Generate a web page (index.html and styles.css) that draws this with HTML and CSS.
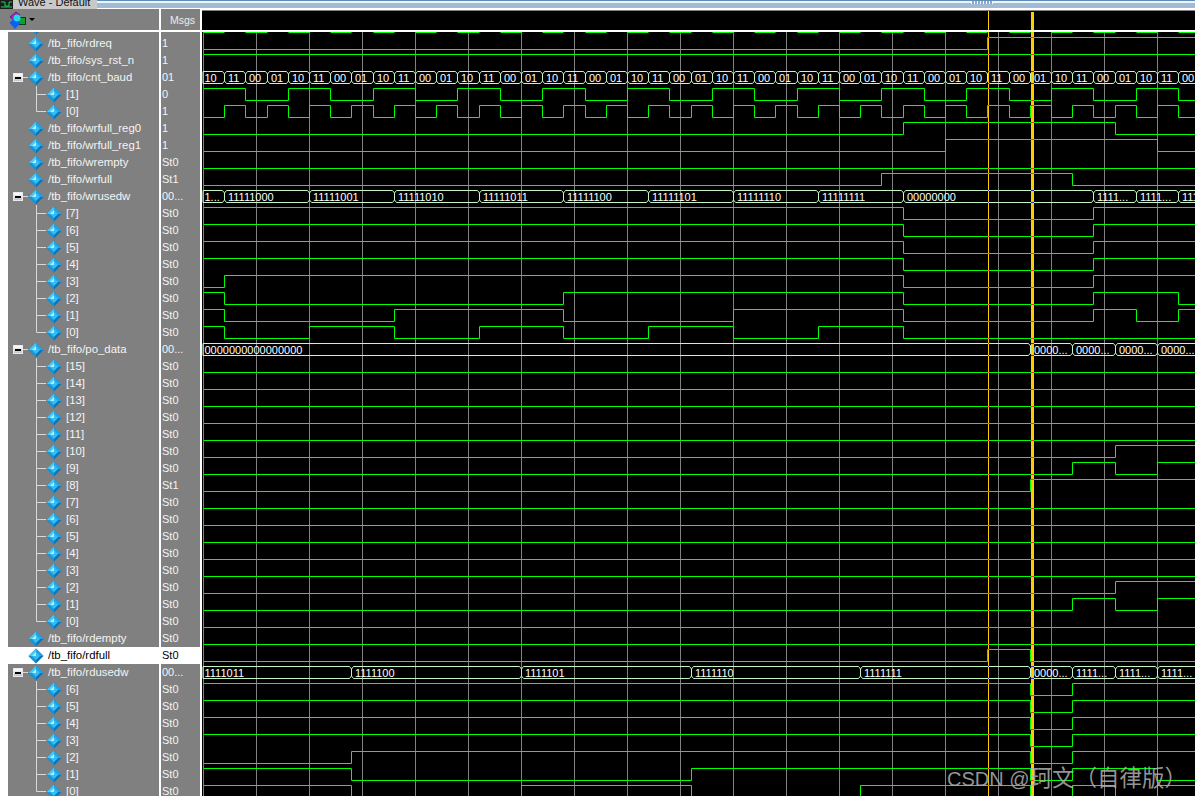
FILE: index.html
```html
<!DOCTYPE html>
<html lang="en">
<head>
<meta charset="utf-8">
<title>Wave - Default</title>
<link rel="stylesheet" href="styles.css">
</head>
<body>
<svg class="defs" width="0" height="0" aria-hidden="true">
  <symbol id="dia" viewBox="0 0 16 16">
    <polygon points="8,0.5 15.5,8 8,15.5 0.5,8" fill="#0c74bc"/>
    <polygon points="8,0.5 0.5,8 8,8" fill="#4cc8f4"/>
    <polygon points="8,0.5 15.5,8 8,8" fill="#22a4e4"/>
    <polygon points="0.5,8 8,15.5 8,8" fill="#1a94d4"/>
    <polygon points="8,4 12,8 8,12 4,8" fill="#30c0f8"/>
    <polygon points="8,4 4,8 8,8" fill="#b0f0ff"/>
  </symbol>
  <symbol id="mid" viewBox="0 0 10 17"><path d="M0.5 0V17M0.5 8.5H10" stroke="#d8d8d8" fill="none"/></symbol>
  <symbol id="end" viewBox="0 0 10 17"><path d="M0.5 0V8.5H10" stroke="#d8d8d8" fill="none"/></symbol>
</svg>
<div class="app">
  <header class="titlebar">
    <div class="title">
      <svg class="title-icon" viewBox="0 0 13 9"><rect width="13" height="9" fill="#1c1c1c"/><path d="M1 2H5V6H9V2H12M1 7H12" stroke="#18d058" fill="none"/></svg>
      <span class="title-text">Wave - Default</span>
    </div>
    <div class="strip"><span class="grip"></span></div>
  </header>
  <div class="panes">
    <section class="names">
      <div class="head">
        <svg class="head-icon" viewBox="0 0 18 18">
          <polygon points="1,6 7,1 11,4 5,9" fill="#b020c0" stroke="#501060" stroke-width="0.7"/>
          <rect x="9.5" y="6.5" width="7" height="7" fill="#10a030" stroke="#064010"/>
          <polygon points="6,6 11.5,12 6,18 0.5,12" fill="#1060f0"/>
          <circle cx="8" cy="7" r="3.5" fill="#20d8f0"/>
        </svg>
        <span class="caret"></span>
      </div>
      <div class="list">
        <div class="row clip"><svg class="dia clipped"><use href="#dia"/></svg></div>
        <div class="row top"><svg class="dia"><use href="#dia"/></svg><span>/tb_fifo/rdreq</span></div>
        <div class="row top"><svg class="dia"><use href="#dia"/></svg><span>/tb_fifo/sys_rst_n</span></div>
        <div class="row group"><i class="box"></i><b class="stub"></b><svg class="dia"><use href="#dia"/></svg><span>/tb_fifo/cnt_baud</span></div>
        <div class="row kid"><svg class="tree"><use href="#mid"/></svg><svg class="dia"><use href="#dia"/></svg><span>[1]</span></div>
        <div class="row kid"><svg class="tree"><use href="#end"/></svg><svg class="dia"><use href="#dia"/></svg><span>[0]</span></div>
        <div class="row top"><svg class="dia"><use href="#dia"/></svg><span>/tb_fifo/wrfull_reg0</span></div>
        <div class="row top"><svg class="dia"><use href="#dia"/></svg><span>/tb_fifo/wrfull_reg1</span></div>
        <div class="row top"><svg class="dia"><use href="#dia"/></svg><span>/tb_fifo/wrempty</span></div>
        <div class="row top"><svg class="dia"><use href="#dia"/></svg><span>/tb_fifo/wrfull</span></div>
        <div class="row group"><i class="box"></i><b class="stub"></b><svg class="dia"><use href="#dia"/></svg><span>/tb_fifo/wrusedw</span></div>
        <div class="row kid"><svg class="tree"><use href="#mid"/></svg><svg class="dia"><use href="#dia"/></svg><span>[7]</span></div>
        <div class="row kid"><svg class="tree"><use href="#mid"/></svg><svg class="dia"><use href="#dia"/></svg><span>[6]</span></div>
        <div class="row kid"><svg class="tree"><use href="#mid"/></svg><svg class="dia"><use href="#dia"/></svg><span>[5]</span></div>
        <div class="row kid"><svg class="tree"><use href="#mid"/></svg><svg class="dia"><use href="#dia"/></svg><span>[4]</span></div>
        <div class="row kid"><svg class="tree"><use href="#mid"/></svg><svg class="dia"><use href="#dia"/></svg><span>[3]</span></div>
        <div class="row kid"><svg class="tree"><use href="#mid"/></svg><svg class="dia"><use href="#dia"/></svg><span>[2]</span></div>
        <div class="row kid"><svg class="tree"><use href="#mid"/></svg><svg class="dia"><use href="#dia"/></svg><span>[1]</span></div>
        <div class="row kid"><svg class="tree"><use href="#end"/></svg><svg class="dia"><use href="#dia"/></svg><span>[0]</span></div>
        <div class="row group"><i class="box"></i><b class="stub"></b><svg class="dia"><use href="#dia"/></svg><span>/tb_fifo/po_data</span></div>
        <div class="row kid"><svg class="tree"><use href="#mid"/></svg><svg class="dia"><use href="#dia"/></svg><span>[15]</span></div>
        <div class="row kid"><svg class="tree"><use href="#mid"/></svg><svg class="dia"><use href="#dia"/></svg><span>[14]</span></div>
        <div class="row kid"><svg class="tree"><use href="#mid"/></svg><svg class="dia"><use href="#dia"/></svg><span>[13]</span></div>
        <div class="row kid"><svg class="tree"><use href="#mid"/></svg><svg class="dia"><use href="#dia"/></svg><span>[12]</span></div>
        <div class="row kid"><svg class="tree"><use href="#mid"/></svg><svg class="dia"><use href="#dia"/></svg><span>[11]</span></div>
        <div class="row kid"><svg class="tree"><use href="#mid"/></svg><svg class="dia"><use href="#dia"/></svg><span>[10]</span></div>
        <div class="row kid"><svg class="tree"><use href="#mid"/></svg><svg class="dia"><use href="#dia"/></svg><span>[9]</span></div>
        <div class="row kid"><svg class="tree"><use href="#mid"/></svg><svg class="dia"><use href="#dia"/></svg><span>[8]</span></div>
        <div class="row kid"><svg class="tree"><use href="#mid"/></svg><svg class="dia"><use href="#dia"/></svg><span>[7]</span></div>
        <div class="row kid"><svg class="tree"><use href="#mid"/></svg><svg class="dia"><use href="#dia"/></svg><span>[6]</span></div>
        <div class="row kid"><svg class="tree"><use href="#mid"/></svg><svg class="dia"><use href="#dia"/></svg><span>[5]</span></div>
        <div class="row kid"><svg class="tree"><use href="#mid"/></svg><svg class="dia"><use href="#dia"/></svg><span>[4]</span></div>
        <div class="row kid"><svg class="tree"><use href="#mid"/></svg><svg class="dia"><use href="#dia"/></svg><span>[3]</span></div>
        <div class="row kid"><svg class="tree"><use href="#mid"/></svg><svg class="dia"><use href="#dia"/></svg><span>[2]</span></div>
        <div class="row kid"><svg class="tree"><use href="#mid"/></svg><svg class="dia"><use href="#dia"/></svg><span>[1]</span></div>
        <div class="row kid"><svg class="tree"><use href="#end"/></svg><svg class="dia"><use href="#dia"/></svg><span>[0]</span></div>
        <div class="row top"><svg class="dia"><use href="#dia"/></svg><span>/tb_fifo/rdempty</span></div>
        <div class="row top selected"><svg class="dia"><use href="#dia"/></svg><span>/tb_fifo/rdfull</span></div>
        <div class="row group"><i class="box"></i><b class="stub"></b><svg class="dia"><use href="#dia"/></svg><span>/tb_fifo/rdusedw</span></div>
        <div class="row kid"><svg class="tree"><use href="#mid"/></svg><svg class="dia"><use href="#dia"/></svg><span>[6]</span></div>
        <div class="row kid"><svg class="tree"><use href="#mid"/></svg><svg class="dia"><use href="#dia"/></svg><span>[5]</span></div>
        <div class="row kid"><svg class="tree"><use href="#mid"/></svg><svg class="dia"><use href="#dia"/></svg><span>[4]</span></div>
        <div class="row kid"><svg class="tree"><use href="#mid"/></svg><svg class="dia"><use href="#dia"/></svg><span>[3]</span></div>
        <div class="row kid"><svg class="tree"><use href="#mid"/></svg><svg class="dia"><use href="#dia"/></svg><span>[2]</span></div>
        <div class="row kid"><svg class="tree"><use href="#mid"/></svg><svg class="dia"><use href="#dia"/></svg><span>[1]</span></div>
        <div class="row kid"><svg class="tree"><use href="#end"/></svg><svg class="dia"><use href="#dia"/></svg><span>[0]</span></div>
      </div>
    </section>
    <section class="msgs">
      <div class="head msgs-head">Msgs</div>
      <div class="list">
        <div class="row clip"></div>
        <div class="val">1</div><div class="val">1</div><div class="val">01</div><div class="val">0</div><div class="val">1</div>
        <div class="val">1</div><div class="val">1</div><div class="val">St0</div><div class="val">St1</div><div class="val">00...</div>
        <div class="val">St0</div><div class="val">St0</div><div class="val">St0</div><div class="val">St0</div>
        <div class="val">St0</div><div class="val">St0</div><div class="val">St0</div><div class="val">St0</div>
        <div class="val">00...</div>
        <div class="val">St0</div><div class="val">St0</div><div class="val">St0</div><div class="val">St0</div>
        <div class="val">St0</div><div class="val">St0</div><div class="val">St0</div><div class="val">St1</div>
        <div class="val">St0</div><div class="val">St0</div><div class="val">St0</div><div class="val">St0</div>
        <div class="val">St0</div><div class="val">St0</div><div class="val">St0</div><div class="val">St0</div>
        <div class="val">St0</div>
        <div class="val selected">St0</div>
        <div class="val">00...</div>
        <div class="val">St0</div><div class="val">St0</div><div class="val">St0</div><div class="val">St0</div>
        <div class="val">St0</div><div class="val">St0</div><div class="val">St0</div>
      </div>
    </section>
    <svg id="wave" class="wave" viewBox="202 9 993 787" width="993" height="787"></svg>
  </div>
  <div class="watermark">CSDN @<span class="wm-cjk">珂文（自律版）</span></div>
</div>
<script src="wave.js"></script>
</body>
</html>
```
FILE: styles.css
```css
* { box-sizing: border-box; }
html, body { margin: 0; padding: 0; background: #000; }
body { width: 1195px; height: 796px; overflow: hidden; font-family: "Liberation Sans", Arial, sans-serif; font-size: 11px; }
.defs { display: block; height: 0; }
.app { position: relative; width: 1195px; height: 796px; overflow: hidden; }

.titlebar { display: flex; height: 9px; overflow: hidden; background: #a3b9d6; }
.title { display: flex; width: 97px; flex: none; background: #c9c9c9; overflow: hidden; }
.title-icon { width: 13px; height: 9px; flex: none; }
.title-text { margin: -5px 0 0 5px; font-size: 11px; line-height: 14px; color: #111; white-space: nowrap; }
.strip { flex: 1; display: flex; justify-content: flex-end; padding-right: 202px; height: 9px; border-top: 1px solid #5f8fb8; background: linear-gradient(#eaf6ff 0, #eaf6ff 2px, #a3b9d6 2px, #a3b9d6 7px, #fff 7px); }
.grip { width: 22px; height: 3px; background: repeating-linear-gradient(90deg, #fff 0, #fff 1px, #8fa6c6 1px, #8fa6c6 3px); }

.panes { display: flex; height: 787px; background: #000; }
.names { width: 161px; flex: none; background: #fff; border-right: 2px solid #fff; }
.msgs { width: 41px; flex: none; background: #fff; border-right: 2px solid #fff; }
.wave { display: block; flex: none; }

.head { height: 21px; margin-bottom: 2px; background: #808080; display: flex; align-items: center; padding-left: 9px; }
.head-icon { width: 18px; height: 18px; }
.caret { margin-left: 2px; width: 0; height: 0; border: 3px solid transparent; border-top-color: #000; border-bottom: 0; }
.msgs-head { padding-left: 9px; color: #ececec; font-size: 10.5px; }

.list { background: #808080; height: 766px; overflow: hidden; }
.names .list { margin-left: 8px; }
.row { display: flex; align-items: center; height: 17px; color: #f4f4f4; white-space: nowrap; }
.row span { margin: -2px 0 0 4px; font-size: 11.4px; }
.clip { height: 3px; overflow: hidden; padding-left: 20px; align-items: flex-end; }
.clipped { margin-bottom: 0; }
.top { padding-left: 20px; }
.group { padding-left: 5px; }
.kid { padding-left: 28px; }
.dia { width: 16px; height: 16px; flex: none; }
.tree { width: 10px; height: 17px; flex: none; }
.box { width: 10px; height: 9px; flex: none; background: linear-gradient(#fff, #c4c4cc); border: 1px solid #e8e8ee; display: flex; align-items: center; justify-content: center; }
.box::after { content: ""; width: 6px; height: 2px; background: #000; }
.stub { width: 5px; height: 1px; flex: none; background: #d8d8d8; }
.val { height: 17px; line-height: 17px; padding-left: 1px; color: #f4f4f4; white-space: nowrap; }
.selected { background: #fff; color: #000; }
.watermark { position: absolute; left: 947px; top: 763px; font-size: 20px; line-height: 26px; color: rgba(176, 176, 176, 0.85); white-space: nowrap; font-family: "Liberation Sans", "Noto Sans CJK SC", sans-serif; }
.wm-cjk { font-size: 22.5px; font-family: "Noto Sans CJK SC", sans-serif; line-height: 26px; }

.grid { stroke: #808080; }
.sig { stroke: #00ff00; fill: none; }
.bus { stroke: #c4f6c4; fill: none; }
.label { fill: #fff; font: 11px "Liberation Sans", Arial, sans-serif; }
.cur { fill: #ffcc00; }
.hit { fill: #ff2a1a; }
.hit-bus { fill: #2a2ad0; }
```
FILE: wave.js
```js
(function () {
  var NS = 'http://www.w3.org/2000/svg';
  var svg = document.getElementById('wave');
  var RIGHT = 1195, LEFT = 204;
  function X(k) { return Math.floor(203.5 + 21.2 * k) + 0.5; }
  function hi(r) { return 37.5 + 17 * r; }
  function lo(r) { return 49.5 + 17 * r; }
  function add(tag, attrs, text) {
    var n = document.createElementNS(NS, tag);
    for (var a in attrs) n.setAttribute(a, attrs[a]);
    if (text !== undefined) n.textContent = text;
    svg.appendChild(n);
    return n;
  }
  function rect(x, y, w, h, fill, cls) {
    var a = { x: x, y: y, width: w, height: h };
    if (fill) a.fill = fill;
    if (cls) a['class'] = cls;
    add('rect', a);
  }

  rect(202, 9, 993, 787, '#000');
  rect(202, 9, 993, 1, '#fff');
  rect(202, 10, 993, 1, '#808080');

  // time grid
  var g = 'M203.5 32V796';
  for (var x = 256.5; x < RIGHT; x += 53) g += 'M' + x + ' 32V796';
  add('path', { d: g, 'class': 'grid' });

  // single-bit signals: [row, initial level, transition indices]
  var I = function (a, b) { var o = []; for (var k = a; k <= b; k++) o.push(k); return o; };
  var byte = [33, 42];
  var bits = [
    [0, 0, [37]],
    [1, 1, []],
    [3, 1, I(0, 24).map(function (n) { return 2 * n + 2; }).filter(function (k) { return k <= 48; })],
    [4, 0, I(1, 47)],
    [5, 0, [33, 43]],
    [6, 0, [35, 45]],
    [7, 0, []],
    [8, 0, [32, 41]],
    [10, 1, byte], [11, 1, byte], [12, 1, byte], [13, 1, byte],
    [14, 0, [1, 33, 42]],
    [15, 1, [1, 17, 33, 42, 46]],
    [16, 1, [1, 9, 17, 25, 33, 42, 44, 46]],
    [17, 1, [1, 5, 9, 13, 17, 21, 25, 29, 33]],
    [19, 0, []], [20, 0, []], [21, 0, []], [22, 0, []], [23, 0, []],
    [24, 0, [43]],
    [25, 0, [41, 43, 45]],
    [26, 0, [39]],
    [27, 0, []], [28, 0, []], [29, 0, []], [30, 0, []], [31, 0, []],
    [32, 0, [43]],
    [33, 0, [41, 43, 45]],
    [34, 0, []],
    [35, 0, []],
    [36, 0, [37, 39]],
    [38, 1, [39, 41]], [39, 1, [39, 41]], [40, 1, [39, 41]], [41, 1, [39, 41]],
    [42, 0, [7, 39, 41]],
    [43, 1, [7, 23, 39, 41, 45]],
    [44, 1, [7, 15, 23, 31, 39, 41, 43, 45]]
  ];
  var hits = [];
  function levelAt(b, px) {
    var lv = b[1];
    b[2].forEach(function (k) { if (X(k) <= px) lv = 1 - lv; });
    return lv;
  }
  bits.forEach(function (b) {
    var r = b[0], lv = b[1], d = 'M' + LEFT + ' ' + (lv ? hi(r) : lo(r));
    b[2].forEach(function (k) {
      var nx = 1 - lv;
      d += 'H' + X(k) + 'V' + (nx ? hi(r) : lo(r));
      lv = nx;
    });
    d += 'H' + RIGHT;
    add('path', { d: d, 'class': 'sig' });
    [[988, 1], [1031, 3]].forEach(function (c) {
      var y = levelAt(b, c[0] + 0.5) ? hi(r) : lo(r);
      hits.push(['hit', c[0], y - 0.5, c[1]]);
    });
  });

  // row above the first visible one: only its high level peeks out under the header
  var peek = '';
  for (var k = 0; k < 48; k += 2) peek += 'M' + X(k) + ' 32.5H' + Math.min(X(k + 1), RIGHT);
  add('path', { d: peek, 'class': 'sig' });

  // buses: [row, transition indices, labels]
  var seq = ['10', '11', '00', '01'], baud = [];
  for (var j = 0; j < 47; j++) baud.push(seq[j % 4]);
  var buses = [
    [2, I(1, 46), baud],
    [9, [1, 5, 9, 13, 17, 21, 25, 29, 33, 42, 44, 46],
      ['1...', '11111000', '11111001', '11111010', '11111011', '11111100', '11111101', '11111110', '11111111', '00000000', '1111...', '1111...', '1111']],
    [18, [39, 41, 43, 45],
      ['0000000000000000', '0000...', '0000...', '0000...', '0000...']],
    [37, [7, 15, 23, 31, 39, 41, 43, 45],
      ['1111011', '1111100', '1111101', '1111110', '1111111', '0000...', '1111...', '1111...', '1111...']]
  ];
  buses.forEach(function (b) {
    var r = b[0], top = hi(r), bot = lo(r), ed = b[1].map(X);
    var d = 'M' + (LEFT - 1) + ' ' + top + 'V' + bot;
    var stops = [LEFT - 3].concat(ed).concat([RIGHT + 10]);
    for (var i = 0; i < stops.length - 1; i++) {
      d += 'M' + (stops[i] + 2) + ' ' + top + 'H' + (stops[i + 1] - 2);
      d += 'M' + (stops[i] + 2) + ' ' + bot + 'H' + (stops[i + 1] - 2);
      add('text', { x: stops[i] + 3.5, y: bot - 1.5, 'class': 'label' }, b[2][i]);
    }
    ed.forEach(function (e) {
      d += 'M' + (e - 2) + ' ' + top + 'L' + e + ' ' + (top + 2.5) + 'L' + (e + 2) + ' ' + top;
      d += 'M' + e + ' ' + (top + 2.5) + 'V' + (bot - 2.5);
      d += 'M' + (e - 2) + ' ' + bot + 'L' + e + ' ' + (bot - 2.5) + 'L' + (e + 2) + ' ' + bot;
    });
    add('path', { d: d, 'class': 'bus' });
    [[988, 1], [1031, 3]].forEach(function (c) {
      hits.push(['hit-bus', c[0], top - 0.5, c[1]]);
      hits.push(['hit-bus', c[0], bot - 0.5, c[1]]);
    });
  });

  // cursors lie over the traces, with the crossings marked
  rect(988, 11, 1, 785, null, 'cur');
  rect(1031, 12, 3, 784, null, 'cur');
  hits.forEach(function (h) { rect(h[1], h[2], h[3], 1, null, h[0]); });
  rect(202, 30, 993, 2, '#fff');
})();
```
